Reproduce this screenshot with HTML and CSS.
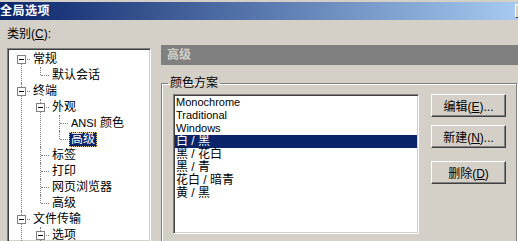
FILE: index.html
```html
<!DOCTYPE html>
<html lang="zh-CN">
<head>
    <meta charset="UTF-8">
    <title>全局选项</title>
    <link rel="stylesheet" href="styles.css">
</head>
<body>
    <div class="titlebar">
        <span class="title">全局选项</span>
        <span class="close"></span>
    </div>

    <div class="main">
        <div class="left">
            <div class="caption">类别(<u>C</u>):</div>
            <div class="tree">
                <ul class="root">
                    <li>
                        <div class="row"><span class="twig"><i class="box"></i></span><span class="label">常规</span></div>
                        <ul>
                            <li><div class="row"><span class="twig"></span><span class="label">默认会话</span></div></li>
                        </ul>
                    </li>
                    <li>
                        <div class="row"><span class="twig"><i class="box"></i></span><span class="label">终端</span></div>
                        <ul>
                            <li>
                                <div class="row"><span class="twig"><i class="box"></i></span><span class="label">外观</span></div>
                                <ul>
                                    <li><div class="row"><span class="twig"></span><span class="label"><span class="lat">ANSI</span> 颜色</span></div></li>
                                    <li><div class="row"><span class="twig"></span><span class="label selected">高级</span></div></li>
                                </ul>
                            </li>
                            <li><div class="row"><span class="twig"></span><span class="label">标签</span></div></li>
                            <li><div class="row"><span class="twig"></span><span class="label">打印</span></div></li>
                            <li><div class="row"><span class="twig"></span><span class="label">网页浏览器</span></div></li>
                            <li><div class="row"><span class="twig"></span><span class="label">高级</span></div></li>
                        </ul>
                    </li>
                    <li class="more">
                        <div class="row"><span class="twig"><i class="box"></i></span><span class="label">文件传输</span></div>
                        <ul>
                            <li class="more">
                                <div class="row"><span class="twig"><i class="box"></i></span><span class="label">选项</span></div>
                            </li>
                        </ul>
                    </li>
                </ul>
            </div>
        </div>

        <div class="right">
            <div class="header">高级</div>
            <fieldset class="group">
                <legend>颜色方案</legend>
                <div class="scheme">
                    <ul class="list">
                        <li class="lat">Monochrome</li>
                        <li class="lat">Traditional</li>
                        <li class="lat">Windows</li>
                        <li class="selected">白 / 黑</li>
                        <li>黑 / 花白</li>
                        <li>黑 / 青</li>
                        <li>花白 / 暗青</li>
                        <li>黄 / 黑</li>
                    </ul>
                    <div class="buttons">
                        <button class="btn">编辑(<u>E</u>)...</button>
                        <button class="btn">新建(<u>N</u>)...</button>
                        <button class="btn btn-gap">删除(<u>D</u>)</button>
                    </div>
                </div>
            </fieldset>
        </div>
    </div>
</body>
</html>
```

FILE: styles.css
```css
* {
    box-sizing: border-box;
}

body {
    margin: 0;
    padding-top: 2px;
    width: 518px;
    height: 241px;
    overflow: hidden;
    background: #d4d0c8;
    color: #000;
    font: 12px "Liberation Sans", "Noto Sans CJK SC", sans-serif;
}

u {
    text-decoration: underline;
}

.lat {
    font-size: 11px;
}

/* title bar */
.titlebar {
    height: 18px;
    display: flex;
    align-items: center;
    overflow: hidden;
    background: linear-gradient(to right, #0a246a, #a6caf0);
    color: #fff;
    font-weight: bold;
}
.titlebar .title {
    line-height: 18px;
    letter-spacing: 0.5px;
}
.titlebar .close {
    flex: none;
    width: 16px;
    height: 14px;
    margin-left: auto;
    margin-right: -13px;
    background: #d4d0c8;
    border: 1px solid;
    border-color: #fff #404040 #404040 #fff;
}

.main {
    display: flex;
    gap: 10px;
}

/* left: category tree */
.left {
    flex: none;
    width: 151px;
    padding-left: 7px;
}
.caption {
    padding-top: 6px;
    line-height: 16px;
    margin-bottom: 6px;
}

.tree {
    width: 144px;
    height: 194px;
    overflow: hidden;
    background: #fff;
    border: 1px solid;
    border-color: #808080 #fff #fff #808080;
    box-shadow: inset 1px 1px 0 #404040, inset -1px -1px 0 #d4d0c8;
    padding: 2px 0 0 3px;
}
.tree ul {
    list-style: none;
    margin: 0;
    padding: 0;
}
.tree ul ul {
    padding-left: 19px;
}
.tree li {
    position: relative;
}
.tree li::before {
    content: "";
    position: absolute;
    left: 10px;
    top: 0;
    bottom: 0;
    border-left: 1px dotted #808080;
}
.tree li:last-child::before {
    bottom: auto;
    height: 8px;
}
/* siblings continue below the visible part */
.tree li.more::before {
    bottom: 0;
    height: auto;
}
.tree .root > li:first-child::before {
    top: 8px;
}

.row {
    display: flex;
    align-items: center;
    height: 16px;
}
.twig {
    flex: none;
    position: relative;
    width: 19px;
    height: 16px;
}
.twig::after {
    content: "";
    position: absolute;
    left: 11px;
    top: 8px;
    width: 8px;
    border-top: 1px dotted #808080;
}
.box {
    position: absolute;
    left: 6px;
    top: 4px;
    z-index: 1;
    width: 9px;
    height: 9px;
    background: #fff;
    border: 1px solid #808080;
}
.box::after {
    content: "";
    position: absolute;
    left: 1px;
    top: 3px;
    width: 5px;
    height: 1px;
    background: #000;
}
.label {
    margin-left: 1px;
    padding: 0 1px;
    line-height: 13px;
    border: 1px solid transparent;
    white-space: nowrap;
}
.label.selected {
    background: #0a246a;
    color: #fff;
    border: 1px dotted #e8c860;
}

/* right: settings page */
.right {
    flex: none;
    width: 357px;
    padding-top: 25px;
}
.header {
    height: 20px;
    line-height: 20px;
    padding-left: 6px;
    background: #808080;
    color: #d4d0c8;
    font-weight: bold;
}

.group {
    margin: 11px 1px 0 0;
    height: 170px;
    padding: 4px 0 0 0;
    border: 1px solid #808080;
    box-shadow: inset 1px 1px 0 #fff, 1px 1px 0 #fff;
}
.group legend {
    margin-left: 6px;
    padding: 0 2px;
    line-height: 14px;
}

.scheme {
    display: flex;
    align-items: flex-start;
    gap: 12px;
    padding-left: 11px;
}

.list {
    list-style: none;
    margin: 0;
    width: 246px;
    height: 140px;
    padding: 0;
    background: #fff;
    border: 1px solid;
    border-color: #808080 #fff #fff #808080;
    box-shadow: inset 1px 1px 0 #404040, inset -1px -1px 0 #d4d0c8;
}
.list li {
    height: 13px;
    line-height: 13px;
    padding-left: 1px;
    margin: 0 1px;
    white-space: nowrap;
}
.list li:first-child {
    margin-top: 1px;
}
.list li.selected {
    background: #0a246a;
    color: #fff;
}

.buttons {
    display: flex;
    flex-direction: column;
    gap: 8px;
}
.btn {
    width: 75px;
    height: 23px;
    padding: 0;
    font: inherit;
    color: #000;
    background: #d4d0c8;
    border: 1px solid;
    border-color: #fff #404040 #404040 #fff;
    box-shadow: inset -1px -1px 0 #808080;
}
.btn-gap {
    margin-top: 5px;
}
```
